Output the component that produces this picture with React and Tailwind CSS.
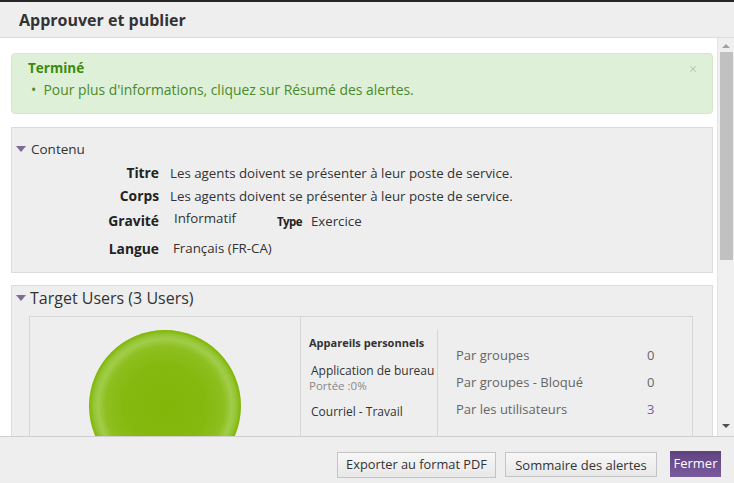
import { X } from 'lucide-react';

const font = { fontFamily: '"Open Sans", "Noto Sans", sans-serif' };

const Caret = () => (
  <svg width="10" height="6" viewBox="0 0 10 6" className="shrink-0">
    <path d="M0 0 L10 0 L5 6 Z" fill="#7d6b95" />
  </svg>
);

const Row = ({ label, children, className = '' }) => (
  <div className={`flex items-center ${className}`}>
    <div className="w-[147px] text-right font-bold text-[13.8px] text-[#222]">{label}</div>
    <div className="pl-[11px] text-[13.3px] text-[#333] whitespace-nowrap">{children}</div>
  </div>
);

const StatRow = ({ label, value, accent }) => (
  <div className="flex items-center h-[27px]">
    <span className="w-[191px] text-[13px] text-[#666]">{label}</span>
    <span className={`text-[13px] ${accent ? 'text-[#7a5c9e]' : 'text-[#666]'}`}>{value}</span>
  </div>
);

export default function App() {
  return (
    <div className="w-[734px] h-[483px] flex flex-col bg-white overflow-hidden" style={font}>
      <div className="h-[2px] bg-[#262626]" />

      {/* header */}
      <div className="h-[36px] bg-[#eeeeee] border-b border-[#dcdcdc] flex items-center pl-[19px]">
        <h1 className="text-[16px] font-bold text-[#333]">Approuver et publier</h1>
      </div>

      {/* body */}
      <div className="flex-1 flex min-h-0">
        <div className="flex-1 overflow-hidden pt-[15px] pl-[11px] pr-[4px] border-r border-[#e4e4e4]">
          {/* success alert */}
          <div className="relative h-[61px] bg-[#dff0d8] border border-[#d3e8c8] rounded-[4px] pl-[16px] pt-[4px]">
            <div className="text-[13.5px] font-bold text-[#3a8a0c]">Terminé</div>
            <div className="mt-[2px] pl-[3px] text-[13.9px] text-[#4a8a2a] whitespace-nowrap">•&nbsp; Pour plus d'informations, cliquez sur Résumé des alertes.</div>
            <X size={10} strokeWidth={2.5} className="absolute right-[14px] top-[10px] text-[#b5c2b0]" />
          </div>

          {/* content panel */}
          <div className="mt-[13px] h-[146px] bg-[#eeeeee] border border-[#dcdcdc]">
            <div className="flex items-center gap-[5px] pl-[4px] pt-[11px]">
              <Caret />
              <span className="text-[13.5px] text-[#333]">Contenu</span>
            </div>
            <div className="mt-[3px]">
              <Row label="Titre" className="h-[23px]">Les agents doivent se présenter à leur poste de service.</Row>
              <Row label="Corps" className="h-[23px]">Les agents doivent se présenter à leur poste de service.</Row>
              <Row label="Gravité" className="h-[27px]">
                <span className="inline-flex items-center">
                  <span className="pl-[4px] w-[107px] -translate-y-[3px]">Informatif</span>
                  <span className="font-bold text-[11.5px] tracking-[-0.6px] text-[#222]">Type</span>
                  <span className="pl-[9px]">Exercice</span>
                </span>
              </Row>
              <Row label="Langue" className="h-[28px]"><span className="pl-[3px]">Français (FR-CA)</span></Row>
            </div>
          </div>

          {/* target users */}
          <div className="mt-[12px] h-[200px] bg-[#eeeeee] border border-[#dcdcdc] pl-[17px]">
            <div className="flex items-center gap-[4px] -ml-[13px] h-[23px]">
              <Caret />
              <span className="text-[16px] text-[#333]">Target Users (3 Users)</span>
            </div>
            <div className="mt-[7px] mr-[19px] h-[170px] border border-[#d6d6d6] flex">
              <div className="w-[270px] pt-[13px] pl-[59px]">
                <div className="w-[152px] h-[152px] rounded-full bg-[radial-gradient(circle_closest-side,#82b608_0%,#86b910_55%,#8dbf1f_78%,#a1cd4a_88%,#95c535_94%,#7eb500_100%)]" />
              </div>
              <div className="w-[137px] border-l border-[#d6d6d6] pl-[8px] pt-[18px]">
                <div className="text-[11px] font-bold text-[#333]">Appareils personnels</div>
                <div className="mt-[12px] pl-[2px] text-[12px] text-[#333] leading-[14px] whitespace-nowrap">Application de bureau</div>
                <div className="text-[11.5px] text-[#888] leading-[15px]">Portée :0%</div>
                <div className="mt-[10px] pl-[2px] text-[12px] text-[#333]">Courriel - Travail</div>
              </div>
              <div className="flex flex-col">
                <div className="h-[13px]" />
                <div className="flex-1 border-l border-[#d6d6d6] pl-[18px] pt-[12px]">
                  <StatRow label="Par groupes" value="0" />
                  <StatRow label="Par groupes - Bloqué" value="0" />
                  <StatRow label="Par les utilisateurs" value="3" accent />
                </div>
              </div>
            </div>
          </div>
        </div>

        {/* scrollbar */}
        <div className="w-[16px] bg-[#f0f0f0] flex flex-col items-center">
          <svg width="8" height="4" viewBox="0 0 8 4" className="mt-[6px]"><path d="M0 4 L4 0 L8 4 Z" fill="#a3a3a3" /></svg>
          <div className="mt-[4px] w-[13px] h-[208px] bg-[#c1c1c1]" />
          <div className="flex-1" />
          <svg width="8" height="4" viewBox="0 0 8 4" className="mb-[8px]"><path d="M0 0 L8 0 L4 4 Z" fill="#505050" /></svg>
        </div>
      </div>

      {/* footer */}
      <div className="h-[47px] bg-[#eeeeee] border-t border-[#cfcfcf] flex items-start justify-end pr-[13px] pt-[15px]">
        <button className="h-[26px] border border-[#c4c4c4] bg-[linear-gradient(#f7f7f7,#e8e8e8)] text-[12.8px] text-[#333] w-[159px] whitespace-nowrap">Exporter au format PDF</button>
        <button className="ml-[9px] h-[25px] border border-[#c4c4c4] bg-[linear-gradient(#f7f7f7,#e8e8e8)] text-[13px] text-[#333] w-[152px] leading-[20px] whitespace-nowrap">Sommaire des alertes</button>
        <button className="ml-[13px] -mt-[1px] h-[26px] w-[51px] bg-[linear-gradient(#5f4380,#7a5a9e)] text-[13px] text-white">Fermer</button>
      </div>
    </div>
  );
}
